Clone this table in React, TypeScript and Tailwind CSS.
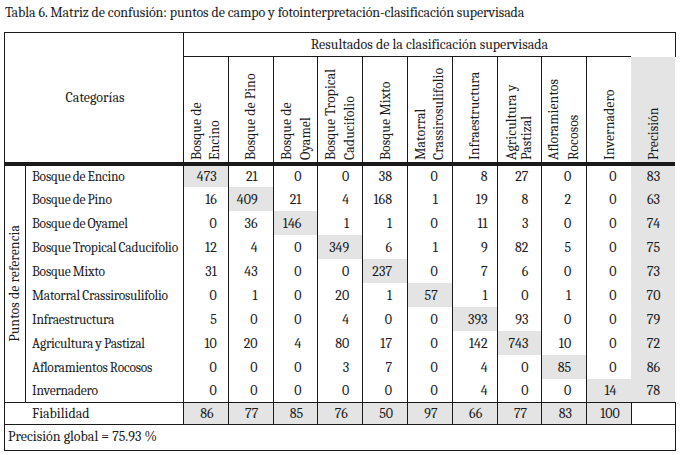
const headers: { lines: string[]; lh: string }[] = [
  { lines: ["Bosque de", "Encino"], lh: "leading-[18px]" },
  { lines: ["Bosque de Pino"], lh: "leading-[17px]" },
  { lines: ["Bosque de", "Oyamel"], lh: "leading-[19px]" },
  { lines: ["Bosque Tropical", "Caducifolio"], lh: "leading-[19px]" },
  { lines: ["Bosque Mixto"], lh: "leading-[17px]" },
  { lines: ["Matorral", "Crassirosulifolio"], lh: "leading-[18px]" },
  { lines: ["Infraestructura"], lh: "leading-[17px]" },
  { lines: ["Agricultura y", "Pastizal"], lh: "leading-[15px]" },
  { lines: ["Afloramientos", "Rocosos"], lh: "leading-[20px]" },
  { lines: ["Invernadero"], lh: "leading-[17px]" },
];

const rows: [string, number[], number][] = [
  ["Bosque de Encino", [473, 21, 0, 0, 38, 0, 8, 27, 0, 0], 83],
  ["Bosque de Pino", [16, 409, 21, 4, 168, 1, 19, 8, 2, 0], 63],
  ["Bosque de Oyamel", [0, 36, 146, 1, 1, 0, 11, 3, 0, 0], 74],
  ["Bosque Tropical Caducifolio", [12, 4, 0, 349, 6, 1, 9, 82, 5, 0], 75],
  ["Bosque Mixto", [31, 43, 0, 0, 237, 0, 7, 6, 0, 0], 73],
  ["Matorral Crassirosulifolio", [0, 1, 0, 20, 1, 57, 1, 0, 1, 0], 70],
  ["Infraestructura", [5, 0, 0, 4, 0, 0, 393, 93, 0, 0], 79],
  ["Agricultura y Pastizal", [10, 20, 4, 80, 17, 0, 142, 743, 10, 0], 72],
  ["Afloramientos Rocosos", [0, 0, 0, 3, 7, 0, 4, 0, 85, 0], 86],
  ["Invernadero", [0, 0, 0, 0, 0, 0, 4, 0, 0, 14], 78],
];

const fiabilidad = [86, 77, 85, 76, 50, 97, 66, 77, 83, 100];

// numbers sit a little off-centre, column by column
const pad = [
  "pr-[11px]",
  "pr-[15px]",
  "pr-[16px]",
  "pr-[13px]",
  "pr-[15px]",
  "pr-[14px]",
  "pr-[9px]",
  "pr-[13px]",
  "pr-[15px]",
  "pr-[15px]",
];

const line = "border-[#1a1a1a]";
const shade = "bg-[#e4e4e4]";

export default function App() {
  return (
    <div className="w-[680px] h-[455px] bg-white text-[#1c1c1c] text-[14px] font-serif">
      <div className="h-[32px] pl-[5px] pt-[4px] leading-[18px] tracking-[-0.1px]">
        Tabla 6. Matriz de confusión: puntos de campo y fotointerpretación-clasificación supervisada
      </div>
      <table className="ml-[4px] w-[671px] table-fixed border-collapse">
        <colgroup>
          <col className="w-[21px]" />
          <col className="w-[158px]" />
          {headers.map((_, i) => (
            <col key={i} className="w-[44.8px]" />
          ))}
          <col className="w-[44px]" />
        </colgroup>
        <thead>
          <tr className="h-[24px]">
            <th
              rowSpan={2}
              colSpan={2}
              className={`border-t border-l border-r border-b-4 border-b-double ${line} font-normal align-middle text-center pl-[2px]`}
            >
              Categorías
            </th>
            <th colSpan={11} className={`border-t border-r ${line} font-normal text-center align-middle leading-[18px]`}>
              Resultados de la clasificación supervisada
            </th>
          </tr>
          <tr className="h-[107px]">
            {headers.map((h, i) => (
              <th key={i} className={`border-t border-l border-b-4 border-b-double ${line} p-0 font-normal`}>
                <div className="flex justify-center h-[102px]">
                  <span className={`[writing-mode:vertical-rl] rotate-180 text-left py-[4px] whitespace-nowrap ${h.lh}`}>
                    {h.lines.map((t, j) => (
                      <span key={j}>
                        {j > 0 && <br />}
                        {t}
                      </span>
                    ))}
                  </span>
                </div>
              </th>
            ))}
            <th className={`border-b-4 border-b-double ${line} ${shade} p-0 font-normal`}>
              <div className="flex justify-center h-[102px]">
                <span className="[writing-mode:vertical-rl] rotate-180 text-left py-[4px] leading-[17px]">Precisión</span>
              </div>
            </th>
          </tr>
        </thead>
        <tbody>
          {rows.map(([name, vals, prec], r) => (
            <tr key={name} className="h-[23.9px]">
              {r === 0 && (
                <td rowSpan={10} className={`border-l border-r ${line} p-0`}>
                  <div className="flex justify-center items-center">
                    <span className="[writing-mode:vertical-rl] rotate-180 leading-[16px] whitespace-nowrap">
                      Puntos de referencia
                    </span>
                  </div>
                </td>
              )}
              <td className="pl-[6px] pt-[2px] whitespace-nowrap leading-[18px] text-[13.5px] tracking-[-0.2px] [word-spacing:-0.5px]">
                {name}
              </td>
              {vals.map((v, c) => (
                <td
                  key={c}
                  className={`border-l ${line} text-right pt-[2px] leading-[18px] ${pad[c]} ${c === r ? shade : ""}`}
                >
                  {v}
                </td>
              ))}
              <td className={`${shade} text-center pt-[2px] leading-[18px]`}>{prec}</td>
            </tr>
          ))}
          <tr className="h-[22px]">
            <td colSpan={2} className={`border-t border-l ${line} pl-[27px] pt-[2px] leading-[18px]`}>
              Fiabilidad
            </td>
            {fiabilidad.map((v, i) => (
              <td key={i} className={`border-t border-l ${line} ${shade} text-center pt-[2px] leading-[18px] pl-[2px]`}>
                {v}
              </td>
            ))}
            <td className={`border-t border-l border-r ${line}`}></td>
          </tr>
          <tr className="h-[26px]">
            <td colSpan={14} className={`border ${line} pl-[3px] leading-[18px]`}>
              Precisión global = 75.93 %
            </td>
          </tr>
        </tbody>
      </table>
    </div>
  );
}
